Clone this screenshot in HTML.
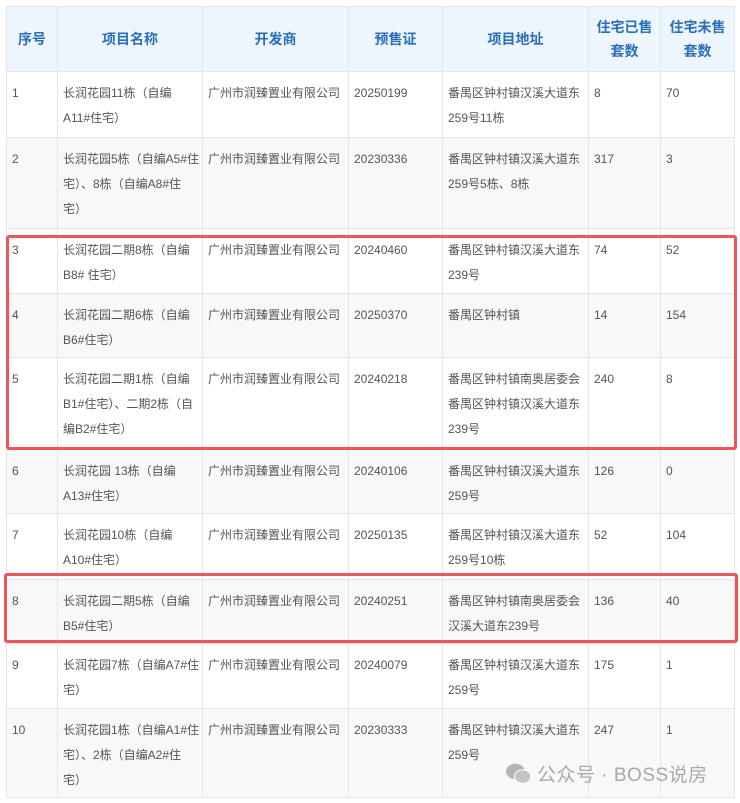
<!DOCTYPE html>
<html><head><meta charset="utf-8"><style>
body{margin:0;background:#fff;width:740px;height:803px;overflow:hidden;position:relative;font-family:"Liberation Sans","Noto Sans CJK SC",sans-serif;}
table{position:absolute;left:6px;top:6px;border-collapse:collapse;table-layout:fixed;width:728px;}
td,th{border:1px solid #e3e6ea;vertical-align:top;padding:9px 1px 0 5px;font-size:12px;line-height:25px;color:#555;font-weight:normal;text-align:left;overflow:hidden;word-break:break-all}
th{background:#edf5fd;color:#2a6fb8;font-weight:bold;font-size:14px;text-align:center;vertical-align:middle;padding:0 4px;line-height:24px}
tr.g td{background:#f8f8f8}
.box{position:absolute;border:3px solid #f05459;border-radius:3px;box-sizing:border-box}
.wm{position:absolute;top:760px;font-size:19px;color:#a9a9a9;letter-spacing:0.5px;white-space:nowrap}
</style></head><body>
<table>
<colgroup><col style="width:51px"><col style="width:145px"><col style="width:146px"><col style="width:94px"><col style="width:146px"><col style="width:72px"><col style="width:74px"></colgroup>
<tr style="height:65px"><th>序号</th><th>项目名称</th><th>开发商</th><th>预售证</th><th>项目地址</th><th>住宅已售<br>套数</th><th>住宅未售<br>套数</th></tr>
<tr style="height:66px"><td>1</td><td>长润花园11栋（自编<br>A11#住宅）</td><td>广州市润臻置业有限公司</td><td>20250199</td><td>番禺区钟村镇汉溪大道东<br>259号11栋</td><td>8</td><td>70</td></tr>
<tr class="g" style="height:91px"><td>2</td><td>长润花园5栋（自编A5#住<br>宅）、8栋（自编A8#住<br>宅）</td><td>广州市润臻置业有限公司</td><td>20230336</td><td>番禺区钟村镇汉溪大道东<br>259号5栋、8栋</td><td>317</td><td>3</td></tr>
<tr style="height:65px"><td>3</td><td>长润花园二期8栋（自编<br>B8# 住宅）</td><td>广州市润臻置业有限公司</td><td>20240460</td><td>番禺区钟村镇汉溪大道东<br>239号</td><td>74</td><td>52</td></tr>
<tr class="g" style="height:64px"><td>4</td><td>长润花园二期6栋（自编<br>B6#住宅）</td><td>广州市润臻置业有限公司</td><td>20250370</td><td>番禺区钟村镇</td><td>14</td><td>154</td></tr>
<tr style="height:92px"><td>5</td><td>长润花园二期1栋（自编<br>B1#住宅）、二期2栋（自<br>编B2#住宅）</td><td>广州市润臻置业有限公司</td><td>20240218</td><td>番禺区钟村镇南奥居委会<br>番禺区钟村镇汉溪大道东<br>239号</td><td>240</td><td>8</td></tr>
<tr class="g" style="height:64px"><td>6</td><td>长润花园 13栋（自编<br>A13#住宅）</td><td>广州市润臻置业有限公司</td><td>20240106</td><td>番禺区钟村镇汉溪大道东<br>259号</td><td>126</td><td>0</td></tr>
<tr style="height:66px"><td>7</td><td>长润花园10栋（自编<br>A10#住宅）</td><td>广州市润臻置业有限公司</td><td>20250135</td><td>番禺区钟村镇汉溪大道东<br>259号10栋</td><td>52</td><td>104</td></tr>
<tr class="g" style="height:64px"><td>8</td><td>长润花园二期5栋（自编<br>B5#住宅）</td><td>广州市润臻置业有限公司</td><td>20240251</td><td>番禺区钟村镇南奥居委会<br>汉溪大道东239号</td><td>136</td><td>40</td></tr>
<tr style="height:65px"><td>9</td><td>长润花园7栋（自编A7#住<br>宅）</td><td>广州市润臻置业有限公司</td><td>20240079</td><td>番禺区钟村镇汉溪大道东<br>259号</td><td>175</td><td>1</td></tr>
<tr class="g" style="height:89px"><td>10</td><td>长润花园1栋（自编A1#住<br>宅）、2栋（自编A2#住<br>宅）</td><td>广州市润臻置业有限公司</td><td>20230333</td><td>番禺区钟村镇汉溪大道东<br>259号</td><td>247</td><td>1</td></tr>
</table>
<div class="box" style="left:6px;top:235px;width:731px;height:215px"></div>
<div class="box" style="left:4px;top:573px;width:734px;height:70px"></div>
<svg style="position:absolute;left:505px;top:762px" width="27" height="23" viewBox="0 0 26 22"><ellipse cx="10" cy="9" rx="9" ry="7.5" fill="#b5b5b5"/><ellipse cx="17" cy="14" rx="8" ry="6.5" fill="#c4c4c4" stroke="#fff" stroke-width="1"/></svg>
<div class="wm" style="left:537px">公众号 · BOSS说房</div>
</body></html>
